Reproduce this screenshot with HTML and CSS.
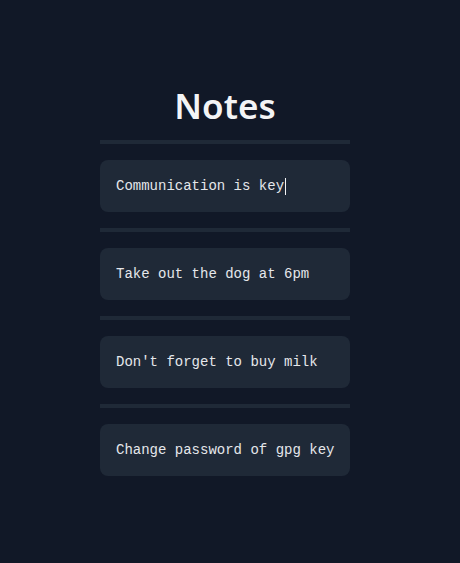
FILE: index.html
```html
<!DOCTYPE html>
<html>
<head>
<meta charset="utf-8">
<link rel="stylesheet" href="styles.css">
</head>
<body>
<main class="page">
  <h1 class="title">Notes</h1>
  <ul class="notes">
    <li class="note"><div class="divider"></div><div class="card"><span class="text">Communication is key</span><span class="caret"></span></div></li>
    <li class="note"><div class="divider"></div><div class="card"><span class="text">Take out the dog at 6pm</span></div></li>
    <li class="note"><div class="divider"></div><div class="card"><span class="text">Don't forget to buy milk</span></div></li>
    <li class="note"><div class="divider"></div><div class="card"><span class="text">Change password of gpg key</span></div></li>
  </ul>
</main>
</body>
</html>
```
FILE: styles.css
```css
html, body {
  margin: 0;
  padding: 0;
  background: #111827;
  height: 100%;
}
.page {
  box-sizing: border-box;
  padding: 82px 10px 0 0;
  display: flex;
  flex-direction: column;
  align-items: center;
}
.title {
  margin: 0;
  font-family: "Noto Sans", sans-serif;
  font-weight: 600;
  font-size: 35px;
  line-height: 48px;
  color: #f3f4f6;
}
.notes {
  list-style: none;
  margin: 10px 0 0;
  padding: 0;
  width: 250px;
  display: flex;
  flex-direction: column;
  gap: 16px;
}
.note {
  display: flex;
  flex-direction: column;
  gap: 16px;
}
.divider {
  height: 4px;
  background: #1f2937;
}
.card {
  background: #1f2937;
  border-radius: 8px;
  height: 52px;
  box-sizing: border-box;
  padding: 0 16px;
  display: flex;
  align-items: center;
  font-family: "Liberation Mono", monospace;
  font-size: 14px;
  color: #e5e7eb;
  white-space: pre;
}
.caret {
  display: inline-block;
  width: 1px;
  height: 17px;
  background: #f3f4f6;
  margin-left: 1px;
}
```
